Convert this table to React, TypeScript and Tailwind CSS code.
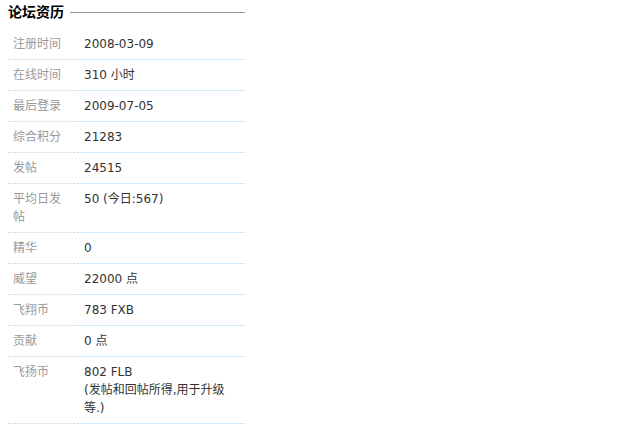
const rows: { label: string; value: React.ReactNode }[] = [
  { label: '注册时间', value: '2008-03-09' },
  { label: '在线时间', value: '310 小时' },
  { label: '最后登录', value: '2009-07-05' },
  { label: '综合积分', value: '21283' },
  { label: '发帖', value: '24515' },
  { label: '平均日发帖', value: '50 (今日:567)' },
  { label: '精华', value: '0' },
  { label: '威望', value: '22000 点' },
  { label: '飞翔币', value: '783 FXB' },
  { label: '贡献', value: '0 点' },
  {
    label: '飞扬币',
    value: (
      <>
        802 FLB
        <br />
        (发帖和回帖所得,用于升级等.)
      </>
    ),
  },
];

export default function App() {
  return (
    <div className="w-[640px] h-[430px] bg-white font-['DejaVu_Sans','Noto_Sans_CJK_SC',sans-serif] text-[12px] leading-[18px]">
      <div className="w-[237px] ml-[8px]">
        {/* 标题 + 横线 */}
        <div className="flex items-center h-[29px] pb-[5px]">
          <h3 className="font-bold text-[14px] text-black whitespace-nowrap">论坛资历</h3>
          <div className="flex-1 h-px bg-[#999] ml-[6px]"></div>
        </div>

        <table className="w-full border-collapse">
          <tbody>
            {rows.map((r, i) => (
              <tr key={i}>
                <td className="w-[70px] align-top pl-[5px] pr-[10px] py-[6px] text-[#999] border-b border-dotted border-[#cfd6da]">
                  {r.label}
                </td>
                <td className="align-top pl-[6px] pr-[12px] py-[6px] text-[#333] border-b border-dotted border-[#b9d3e3]">
                  {r.value}
                </td>
              </tr>
            ))}
          </tbody>
        </table>
      </div>
    </div>
  );
}
